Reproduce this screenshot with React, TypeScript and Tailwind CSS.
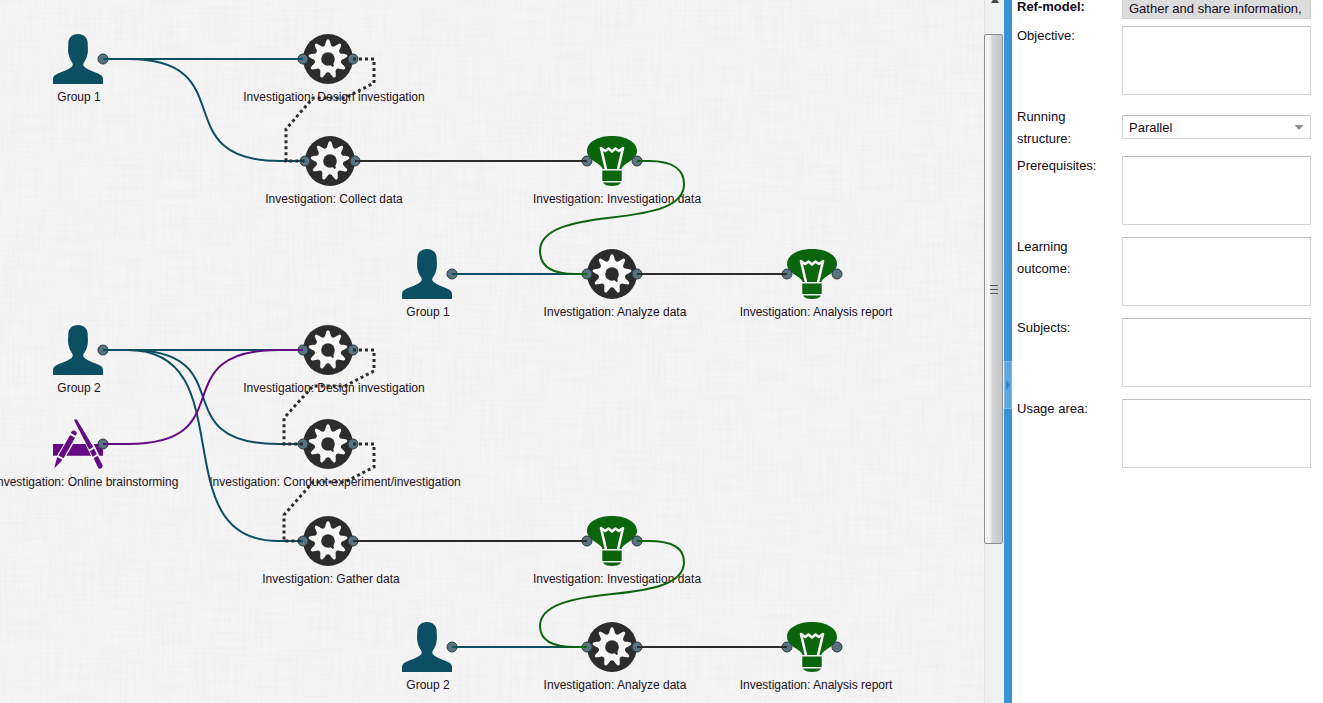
import React from 'react';

type Kind = 'group' | 'activity' | 'artifact' | 'tool';

interface DiagramNode {
  id: string;
  kind: Kind;
  x: number;
  y: number;
  label: string;
  labelX: number;
  input?: boolean;
}

const NODES: DiagramNode[] = [
  { id: 'g1', kind: 'group', x: 78, y: 59, label: 'Group 1', labelX: 79 },
  { id: 'd1', kind: 'activity', x: 328, y: 59, label: 'Investigation: Design investigation', labelX: 334, input: true },
  { id: 'c1', kind: 'activity', x: 330, y: 161, label: 'Investigation: Collect data', labelX: 334, input: true },
  { id: 'i1', kind: 'artifact', x: 612, y: 161, label: 'Investigation: Investigation data', labelX: 617, input: true },
  { id: 'g1b', kind: 'group', x: 427, y: 274, label: 'Group 1', labelX: 428 },
  { id: 'a1', kind: 'activity', x: 612, y: 274, label: 'Investigation: Analyze data', labelX: 615, input: true },
  { id: 'r1', kind: 'artifact', x: 812, y: 274, label: 'Investigation: Analysis report', labelX: 816, input: true },
  { id: 'g2', kind: 'group', x: 78, y: 350, label: 'Group 2', labelX: 79 },
  { id: 'd2', kind: 'activity', x: 328, y: 350, label: 'Investigation: Design investigation', labelX: 334, input: true },
  { id: 't2', kind: 'tool', x: 78, y: 444, label: 'Investigation: Online brainstorming', labelX: 86 },
  { id: 'e2', kind: 'activity', x: 328, y: 444, label: 'Investigation: Conduct experiment/investigation', labelX: 335, input: true },
  { id: 'h2', kind: 'activity', x: 328, y: 541, label: 'Investigation: Gather data', labelX: 331, input: true },
  { id: 'i2', kind: 'artifact', x: 612, y: 541, label: 'Investigation: Investigation data', labelX: 617, input: true },
  { id: 'g2b', kind: 'group', x: 427, y: 647, label: 'Group 2', labelX: 428 },
  { id: 'a2', kind: 'activity', x: 612, y: 647, label: 'Investigation: Analyze data', labelX: 615, input: true },
  { id: 'r2', kind: 'artifact', x: 812, y: 647, label: 'Investigation: Analysis report', labelX: 816, input: true },
];

const TEAL = '#0d4f62';
const DARK = '#2c2c2c';
const PURPLE = '#660a85';
const GREEN = '#0b650c';

const curve = (x1: number, y1: number, x2: number, y2: number) =>
  `M${x1} ${y1}H${x1 + 25}C${x1 + 142} ${y1} ${x2 - 142} ${y2} ${x2 - 25} ${y2}H${x2}`;

const LINKS: { d: string; color: string }[] = [
  { d: 'M103 59H303', color: TEAL },
  { d: curve(103, 59, 305, 161), color: TEAL },
  { d: 'M355 161H587', color: DARK },
  { d: 'M452 274H587', color: TEAL },
  { d: 'M637 161H649C676 161 684 172 684 184C684 207 652 213 612 217.500C572 222 540 229 540 251C540 264 548 274 575 274H587', color: GREEN },
  { d: 'M637 274H787', color: DARK },
  { d: 'M103 350H303', color: TEAL },
  { d: curve(103, 350, 303, 444), color: TEAL },
  { d: curve(103, 350, 303, 541), color: TEAL },
  { d: curve(103, 444, 303, 350), color: PURPLE },
  { d: 'M353 541H587', color: DARK },
  { d: 'M452 647H587', color: TEAL },
  { d: 'M637 541H649C676 541 684 551 684 562C684 584 652 590 612 594C572 598 540 605 540 626C540 638 548 647 575 647H587', color: GREEN },
  { d: 'M637 647H787', color: DARK },
];

const SEQUENCES = [
  'M353 59H374V83L345 98H313L286 129V161H305',
  'M353 350H374V371L345 386H313L284 418V444H303',
  'M353 444H374V467L345 482H313L284 515V541H303',
];

const polar = (deg: number, r: number) => {
  const a = ((deg - 90) * Math.PI) / 180;
  return `${(25 + r * Math.cos(a)).toFixed(2)} ${(25 + r * Math.sin(a)).toFixed(2)}`;
};

const GEAR = (() => {
  let d = `M${polar(4, 19)}`;
  for (let k = 0; k < 9; k += 1) {
    const a = k * 40;
    d += `L${polar(a + 9, 16)}C${polar(a + 13, 12.5)} ${polar(a + 27, 12.5)} ${polar(a + 31, 16)}L${polar(a + 36, 19)}Q${polar(a + 40, 20.5)} ${polar(a + 44, 19)}`;
  }
  return `${d}Z`;
})();

function NodeIcon({ kind }: { kind: Kind }) {
  return (
    <svg viewBox="0 0 50 50" className="block size-[50px]" aria-hidden="true">
      {kind === 'group' && (
        <path
          fill={TEAL}
          d="M25 0C31 0 34.700 4 34.700 9C34.700 13 35.200 15 34.800 18C34.500 21 33.500 24.500 31.500 27.500C30 29.500 29.800 31 31 32.500C36 36.500 43 38.500 46.500 40.200C49.300 41.500 50 43 50 45V50H0V45C0 43 .7 41.500 3.500 40.200C7 38.500 14 36.500 19 32.500C20.200 31 20 29.500 18.500 27.500C16.500 24.500 15.500 21 15.200 18C14.800 15 15.300 13 15.300 9C15.300 4 19 0 25 0Z"
        />
      )}
      {kind === 'activity' && (
        <>
          <circle cx="25" cy="25" r="25" fill={DARK} />
          <path d={GEAR} fill="#f7f7f7" />
          <circle cx="25" cy="25" r="6.800" fill={DARK} />
          <path d="M26 29L30.500 26.500L30.500 31L31 32L29.500 33L28 31.500Z" fill={DARK} />
        </>
      )}
      {kind === 'artifact' && (
        <>
          <path fill={GREEN} d="M25 0C39 0 50 6 50 15C50 21 44 24.500 39.500 27.500C36.500 29.500 35 31 34.500 33H15.500C15 31 13.500 29.500 10.500 27.500C6 24.500 0 21 0 15C0 6 11 0 25 0Z" />
          <path fill="none" stroke="#f7f7f7" strokeWidth="2.600" strokeLinejoin="round" d="M19 33.500L14 12L18.200 15L21.500 12.500L25 15.500L28.500 12.500L31.800 15L36 12L31 33.500" />
          <path fill={GREEN} d="M15.300 34.500H34.700V45H15.300ZM15.800 46.500H34.200C32.500 49 29.500 50 25 50S17.500 49 15.800 46.500Z" />
        </>
      )}
      {kind === 'tool' && (
        <>
          <path fill={PURPLE} d="M0 25H50V36.700H0Z" />
          <path stroke="#f7f7f7" strokeWidth="8" d="M22 14L5 43" />
          <path stroke="#f7f7f7" strokeWidth="7.500" d="M34 19.500L47 47" />
          <path fill={PURPLE} d="M18.700 12.500C20 10.300 24.500 12 23.800 14.800L22.700 16.700L17.700 13.900ZM17 16L22 18.800L10.500 39.300L5.500 36.400ZM4.500 38L9.300 40.800L7.700 43L1.300 49.300L3.300 41Z" />
          <path fill={PURPLE} d="M21.500 .4C22.500 -.2 23.800 .3 24.500 1.500L40.300 28L36.100 30.600L22.200 3.500C21.600 2.200 21.100 1.100 21.500 .4ZM36.800 32.200L41 29.700L43.800 35.200L39.700 37.700ZM40.600 39.200L44.700 36.800L49.500 46C50.500 48.800 47 51 45.200 49Z" />
        </>
      )}
    </svg>
  );
}

function Ports() {
  return (
    <g stroke="#2f3a3e" strokeWidth="1" fill="#587480">
      {NODES.map((n) => (
        <React.Fragment key={n.id}>
          {n.input && <circle cx={n.x - 25} cy={n.y} r="5" />}
          <circle cx={n.x + 25} cy={n.y} r="5" />
        </React.Fragment>
      ))}
    </g>
  );
}

function Canvas() {
  return (
    <main className="relative min-w-0 flex-1 overflow-hidden bg-[#f5f5f5]">
      <svg className="absolute inset-0 size-full opacity-40" aria-hidden="true">
        <filter id="weft" x="0" y="0" width="100%" height="100%">
          <feTurbulence type="fractalNoise" baseFrequency="0.02 0.4" numOctaves="2" seed="4" />
          <feColorMatrix values="0 0 0 0 0.6  0 0 0 0 0.6  0 0 0 0 0.6  0.5 0 0 0 -0.19" />
        </filter>
        <filter id="warp" x="0" y="0" width="100%" height="100%">
          <feTurbulence type="fractalNoise" baseFrequency="0.4 0.02" numOctaves="2" seed="9" />
          <feColorMatrix values="0 0 0 0 0.6  0 0 0 0 0.6  0 0 0 0 0.6  0.5 0 0 0 -0.19" />
        </filter>
        <rect width="100%" height="100%" filter="url(#weft)" />
        <rect width="100%" height="100%" filter="url(#warp)" />
      </svg>
      {NODES.map((n) => (
        <React.Fragment key={n.id}>
          <div className="absolute" style={{ left: n.x - 25, top: n.y - 25 }}>
            <NodeIcon kind={n.kind} />
          </div>
          <span
            className="absolute -translate-x-1/2 text-xs leading-4 whitespace-nowrap text-[#1c1020]"
            style={{ left: n.labelX, top: n.y + 30 }}
          >
            {n.label}
          </span>
        </React.Fragment>
      ))}
      <svg className="absolute inset-0 size-full" aria-hidden="true">
        <Ports />
        <g fill="none" strokeWidth="2">
          {LINKS.map((l) => (
            <path key={l.d} d={l.d} stroke={l.color} />
          ))}
        </g>
        <g fill="none" stroke={DARK} strokeWidth="3" strokeDasharray="3 3">
          {SEQUENCES.map((d) => (
            <path key={d} d={d} />
          ))}
        </g>
      </svg>
    </main>
  );
}

function ScrollTrack() {
  return (
    <div className="flex w-5 shrink-0 flex-col border-l border-[#e2e2e2] bg-[#f0f0f0]">
      <div className="flex h-[34px] justify-center">
        <svg viewBox="0 0 10 4" className="h-1 w-2.5" aria-hidden="true">
          <path d="M3 0H7L9 3H1Z" fill="#444" />
        </svg>
      </div>
      <div className="mr-px -ml-px flex h-[510px] flex-col items-center justify-center gap-[3px] rounded-xs border border-[#8f8f8f] bg-linear-to-r from-[#f3f3f3] from-30% via-[#d6d7d9] via-40% to-[#c4c5c9]">
        <span className="h-px w-2 bg-[#555]" />
        <span className="h-px w-2 bg-[#555]" />
        <span className="h-px w-2 bg-[#555]" />
      </div>
    </div>
  );
}

function Divider() {
  return (
    <div className="w-2 shrink-0 bg-[#3a92d4] pt-[361px]">
      <button
        type="button"
        aria-label="Collapse panel"
        className="flex h-12 w-full items-center justify-center border border-[#7dbbe9] bg-[#5ba6e0]"
      >
        <svg viewBox="0 0 4 10" className="h-2.5 w-1 shrink-0" aria-hidden="true">
          <path d="M0 0L4 5L0 10Z" fill="#2f83c6" />
        </svg>
      </button>
    </div>
  );
}

function AreaRow({ id, label }: { id: string; label: string }) {
  return (
    <div className="flex items-start">
      <label htmlFor={id} className="w-[105px] shrink-0 pr-4">
        {label}
      </label>
      <textarea
        id={id}
        className="mt-px mb-1.5 block h-[69px] min-w-0 flex-1 resize-none border border-[#d4d4d4] border-t-[#bcbcbc] bg-white px-1.5 outline-none"
      />
    </div>
  );
}

function Properties() {
  return (
    <aside className="w-[311px] shrink-0 overflow-hidden bg-white pr-3 pl-[5px]">
      <form className="-mt-1 flex flex-col gap-[5px] text-[13px] leading-[22px] text-[#120a16]">
        <div className="flex items-start">
          <label htmlFor="ref-model" className="w-[105px] shrink-0 font-bold">
            Ref-model:
          </label>
          <input
            id="ref-model"
            readOnly
            defaultValue="Gather and share information,"
            className="mb-px h-[23px] min-w-0 flex-1 border border-[#d0d0d0] bg-[#dcdcdc] px-1.5 pt-0.5 outline-none"
          />
        </div>
        <AreaRow id="objective" label="Objective:" />
        <div className="flex items-start">
          <label htmlFor="structure" className="w-[105px] shrink-0 pr-8">
            Running structure:
          </label>
          <div className="relative mt-[9px] min-w-0 flex-1">
            <select
              id="structure"
              className="block h-6 w-full appearance-none border border-[#d4d4d4] border-t-[#bcbcbc] bg-white px-1.5 pt-0.5 leading-5 outline-none"
            >
              <option>Parallel</option>
            </select>
            <svg viewBox="0 0 10 5" className="pointer-events-none absolute top-2.5 right-[7px] h-[5px] w-2.5" aria-hidden="true">
              <path d="M0.500 0H9.500L5 5Z" fill="#8f8f8f" />
            </svg>
          </div>
        </div>
        <AreaRow id="prerequisites" label="Prerequisites:" />
        <AreaRow id="outcome" label="Learning outcome:" />
        <AreaRow id="subjects" label="Subjects:" />
        <AreaRow id="usage" label="Usage area:" />
      </form>
    </aside>
  );
}

export default function App() {
  return (
    <div className="flex h-screen overflow-hidden font-['Liberation_Sans',Arial,sans-serif]">
      <Canvas />
      <ScrollTrack />
      <Divider />
      <Properties />
    </div>
  );
}
